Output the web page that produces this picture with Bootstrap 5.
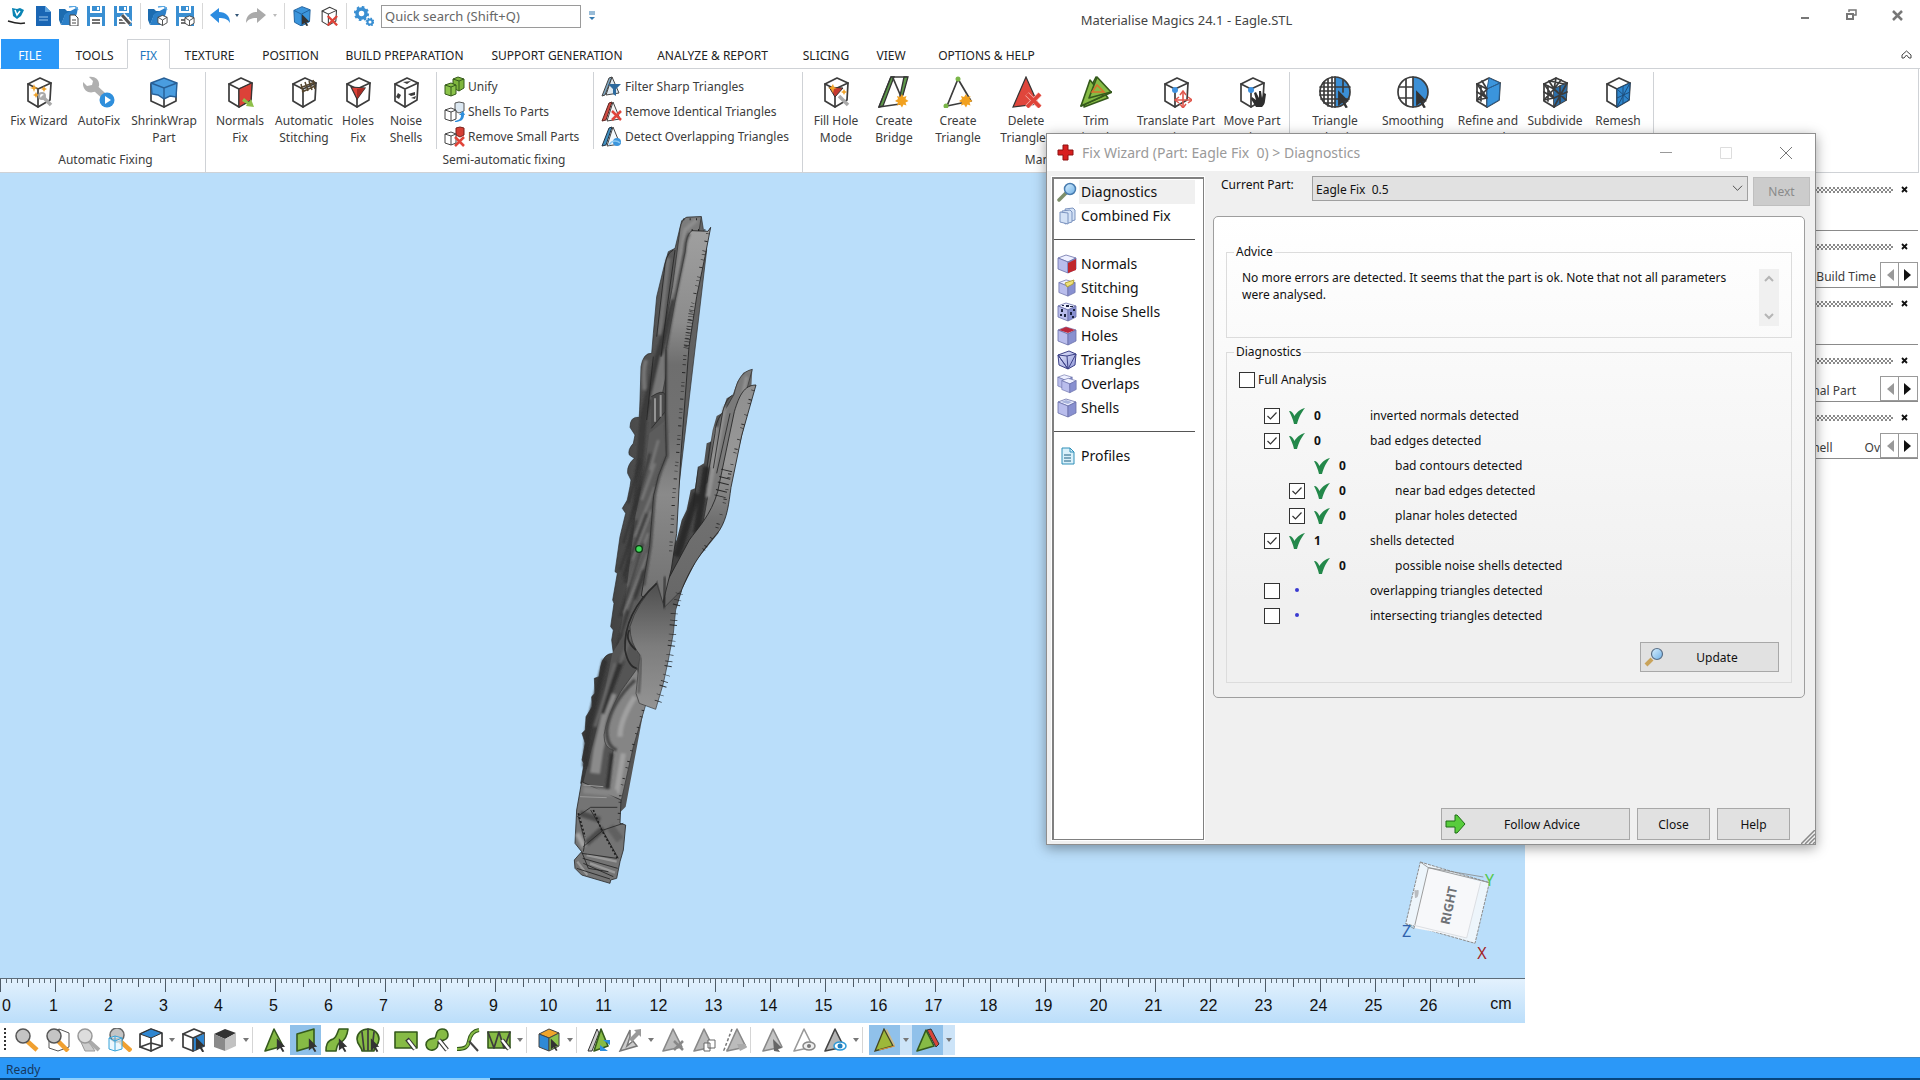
<!DOCTYPE html>
<html lang="en">
<head>
<meta charset="utf-8">
<meta name="viewport" content="width=device-width, initial-scale=1">
<title>Materialise Magics 24.1 - Eagle.STL</title>
<link rel="stylesheet" href="https://cdn.jsdelivr.net/npm/bootstrap@5.3.0/dist/css/bootstrap.min.css">
<style>
:root{--ink:#3c3c3c;--line:#cfd2d6;--sky:#badefa;--blue:#2b98f8}
body{font-family:"Noto Sans","Open Sans",sans-serif;font-size:12px;line-height:17px;color:var(--ink);background:#fff}
button{font:inherit;color:inherit;background:none;border:0;padding:0}
svg{display:block;flex:none}
.k{fill:none;stroke:#3c3c3c;stroke-width:1.7;stroke-linejoin:round;stroke-linecap:round}
.kw{fill:#fff;stroke:#3c3c3c;stroke-width:1.7;stroke-linejoin:round}
.kg{fill:#86bb45;stroke:#355a1c;stroke-width:1.6;stroke-linejoin:round}
.kx{fill:none;stroke:#df4338;stroke-width:3.6}
/* title bar */
.titlebar{height:38px;padding:0 12px 6px 7px}
.quick{width:582px;gap:7px}
.vr-line{width:1px;height:26px;background:#d8d8d8}
.searchbox{width:200px;height:23px;border:1px solid #9a9a9a;padding:0 3px;font-size:13px;color:#555;border-radius:0}
.searchbox::placeholder{color:#666}
.wintitle{font-size:13px;color:#444;padding:8px 18px 0 0}
/* tabs */
.tabstrip{height:31px;grid-template-columns:61px 65px 43px 79px 83px 145px 160px 151px 76px 54px 137px 1fr;border-bottom:1px solid var(--line);padding-left:1px;padding-top:1px}
.tabstrip a{color:#222;text-decoration:none;font-size:12px;text-align:center;line-height:30px;padding-top:2px;white-space:nowrap;height:30px}
.tabstrip .filetab{background:var(--blue);color:#fff;width:58px}
.tabstrip .opentab{border:1px solid var(--line);border-bottom-color:#fff;color:#2277be;line-height:28px}
/* ribbon */
.ribbon{height:104px;border-bottom:1px solid var(--line);border-right:1px solid var(--line);margin-right:1px}
.group{border-right:1px solid var(--line);margin-top:3px}
.g1{width:206px}.g2{width:597px}.g3{width:487px}.g4{width:364px}
.tools{display:grid;height:76px}
.g1 .tools{grid-template-columns:62px 58px 72px;padding-left:8px}
.g2 .tools{grid-template-columns:64px 64px 44px 52px 161px 1fr;padding-left:2px}
.g3 .tools{grid-template-columns:60px 56px 72px 64px 76px 84px 68px;padding-left:3px}
.g4 .tools{grid-template-columns:78px 78px 72px 62px 64px;padding-left:6px}
.tool{display:flex;flex-direction:column;align-items:center;white-space:nowrap;padding-top:4px;gap:4px;line-height:17px}
.smalltools{border-left:1px solid var(--line);padding:2px 0 0 7px}
.tool+.smalltools{margin-left:4px}
.smalltools button{display:flex;align-items:center;gap:3px;height:25px;white-space:nowrap}
.grouplabel{text-align:center;line-height:18px;margin-top:3px}
.g1 .grouplabel{padding-left:6px}
/* workspace */
.scene{background:var(--sky)}
.stage{min-width:0}
.eagle{left:540px;top:27px}
.navcube{right:25px;bottom:14px}
.ruler{height:45px;border-top:1px solid #5d6c78;background:linear-gradient(#e3f1fd,#bbdefa)}
.ruler ol{list-style:none;margin:17px 0 0;padding:0 0 0 26px;color:#111;font:16px/20px "Liberation Sans",sans-serif}
.ruler li{width:55px;text-align:center;flex:none}
.ruler li.zero{width:11px;margin-left:-25px;margin-right:14px}
.ruler .unit{width:90px;margin-top:-2px}
.dock{width:395px;padding:1px 2px 0 0}
.pane{height:57px;border-bottom:1px solid #8b8b8b;padding-top:9px}
.hatch{height:6px;width:90px;margin-right:7px;background:repeating-conic-gradient(#8a8a8a 0 25%,#fff 0 50%) 0 0/4px 4px}
.shut{width:18px;height:14px}
.panetabs{height:25px;margin-top:8px}
.panetabs button{width:19px;height:25px;border:1px solid #9a9a9a;display:flex;align-items:center;justify-content:center}
.panetabs button+button{border-left:0}
.panetabs span{padding-top:4px}
/* lower bar */
.lower{height:34px;padding-left:12px}
.lower button{width:31px;height:30px;display:flex;align-items:center;justify-content:center}
.lower .drop{width:12px}
.lower .drop::after{content:"";border:4px solid transparent;border-top-color:#777;border-bottom:0;border-left-width:3px;border-right-width:3px}
.lower .cut{width:7px;height:26px;border-left:1px solid #d5d5d5}
.lower .on{background:#90c1ea}.lower .onsoft{background:#cde4f8}
.gripdots{width:2px;height:24px;margin-left:-8px;margin-right:5px;background:repeating-linear-gradient(#333 0 2px,#fff 2px 4px)}
.status{height:21px;background:var(--blue);border-top:1px solid #4288c4;color:#17375c;font-size:12px;line-height:23px;padding-left:6px}
.sliver{height:2px;background:linear-gradient(90deg,#07457e 60px,#8fd0fc 60px 490px,#07457e 490px)}
/* wizard window */
.wizard{right:104px;top:133px;width:770px;height:712px;background:#f0f0f0;border:1px solid #8f8f8f;box-shadow:0 3px 12px rgba(0,0,0,.38);color:#111;z-index:5}
.wizhead{height:37px;background:#fff;padding:0 23px 0 10px;color:#9a9a9a;font-size:14px}
.wizlist{width:152px;border:1px solid #808080;outline:1px solid #fff;background:#fff;margin:6px 0 4px 5px;padding:2px 8px 0 1px;box-shadow:inset 1px 1px 0 #808080}
.wizlist a{color:#111;text-decoration:none;font-size:14px;height:24px;line-height:24px;gap:2px;padding-left:3px}
.wizlist a span{flex:1;padding-left:2px}
.wizlist .picked span{background:#f0f0f0}
.wizlist hr{margin:11px 0 12px;border-color:#555;opacity:1}
.wizmain{padding:5px 5px 4px 9px}
.partrow{padding-left:8px;gap:5px}
.partrow label{width:86px;line-height:18px;white-space:nowrap;flex:none}
.partselect{--bs-form-select-bg-img:url("data:image/svg+xml,%3csvg xmlns='http://www.w3.org/2000/svg' viewBox='0 0 12 12'%3e%3cpath fill='none' stroke='%23444' d='M1 3l5 5 5-5'/%3e%3c/svg%3e");background-size:11px;background-position:right 4px center;height:25px;padding:2px 20px 0 3px;font-size:12px;line-height:20px;background-color:#e1e1e1;border:1px solid #a0a0a0;border-radius:0;color:#111}
.nextbtn{width:57px;height:29px;background:#ccc;border:1px solid #bfbfbf;color:#8a8a8a;margin-top:1px}
.sheet{margin:10px 5px 0 0;border:1px solid #9e9e9e;border-radius:5px;background:linear-gradient(#fff,#f0f0f0 80%);padding:26px 12px 14px}
.sheet fieldset{border:1px solid #dcdcdc;min-width:0}
.sheet fieldset+fieldset{margin-top:5px}
.sheet legend{float:none;width:auto;font-size:12px;line-height:18px;margin:0 0 0 7px;padding:0 2px;height:18px}
.advice{padding:8px 12px 11px 15px}
.advice p{margin:0;line-height:17px}
.scroller{width:20px;height:57px;background:#f0f0f0;padding:6px 0}
.box{appearance:none;width:16px;height:16px;border:1px solid #333;border-radius:0;background-color:#fff;margin:0;flex:none}
.box:checked{background:#fff url("data:image/svg+xml,%3csvg xmlns='http://www.w3.org/2000/svg' viewBox='0 0 14 14'%3e%3cpath fill='none' stroke='%23333' stroke-width='1.2' d='M2.500 7l3 3 6-6.500'/%3e%3c/svg%3e") center/14px}
.full{height:25px;padding:0 0 0 12px;gap:3px;margin:6px 0 11px}
.finding{height:25px;gap:9px;padding-left:37px}
.finding.deep{padding-left:62px}
.finding .gapbox{width:16px}
.finding b{width:47px}
.plainbtn{background:#e1e1e1;border:1px solid #a8a8a8;height:32px;font-size:12px}
.updatebtn{width:139px;height:30px;margin:14px 12px 10px 0;padding:0 8px 0 3px}
.wizfoot{gap:7px;padding-right:20px}
.w-advice{width:189px;padding:0 11px 0 3px}.w-small{width:73px}
.grip{right:0;bottom:0}
</style>
<script src="https://cdn.jsdelivr.net/npm/bootstrap@5.3.0/dist/js/bootstrap.bundle.min.js"></script>
</head>
<body class="vh-100 d-flex flex-column overflow-hidden position-relative">

<svg width="0" height="0" class="position-absolute" aria-hidden="true">
  <defs>
    <linearGradient id="lens" x1="0" y1="0" x2="1" y2="1"><stop offset="0" stop-color="#d9f0ff"/><stop offset="1" stop-color="#6fb0e6"/></linearGradient>
    <linearGradient id="lilac" x1="0" y1="0" x2="1" y2="1"><stop offset="0" stop-color="#e6e8fb"/><stop offset="1" stop-color="#8f97d8"/></linearGradient>
    <linearGradient id="shade" x1="0" y1="0" x2="1" y2="0"><stop offset="0" stop-color="#383838"/><stop offset="1" stop-color="#666"/></linearGradient>
    <linearGradient id="rim" x1="0" y1="0" x2="0" y2="1"><stop offset="0" stop-color="#a0a0a0"/><stop offset=".25" stop-color="#8c8c8c"/><stop offset=".36" stop-color="#6e6e6e"/><stop offset=".55" stop-color="#727272"/><stop offset=".7" stop-color="#8a8a8a"/><stop offset="1" stop-color="#6f6f6f"/></linearGradient>
    <linearGradient id="rimfar" x1="0" y1="0" x2="0" y2="1"><stop offset="0" stop-color="#8f8f8f"/><stop offset=".35" stop-color="#989898"/><stop offset=".6" stop-color="#707070"/><stop offset="1" stop-color="#666"/></linearGradient>
    <linearGradient id="belly" x1="0" y1="0" x2="0" y2="1"><stop offset="0" stop-color="#4e4e4e"/><stop offset=".5" stop-color="#7d7d7d"/><stop offset="1" stop-color="#949494"/></linearGradient>
    <filter id="soft" x="-10%" y="-10%" width="120%" height="120%"><feGaussianBlur stdDeviation="3"/></filter>
  </defs>
  <symbol id="cube" viewBox="0 0 32 32"><path class="kw" d="M5 8 17 2l11 5-1 17-12 7-10-6z"/><path class="k" d="M5 8l10 5 13-6M15 13v18"/></symbol>
  <symbol id="arrowhead" viewBox="0 0 12 16"><path d="M1 0l10 10-4 .5 3 5-2 1-3-5-4 3z" fill="#333"/></symbol>
  <symbol id="tick" viewBox="0 0 16 16"><path d="M0 3c3 0 4 2 5.500 5C7 5 11 1 16 0c-4 5-6 9-8 16H5C4 11 2 7 0 3z" fill="#23884a"/></symbol>
  <symbol id="glass" viewBox="0 0 20 20"><path d="M2 18l7-7" stroke="#7e8f6b" stroke-width="3.500" stroke-linecap="round"/><circle cx="13" cy="7" r="5.500" fill="url(#lens)" stroke="#4a7db0" stroke-width="1.500"/></symbol>
  <symbol id="block" viewBox="0 0 20 20"><path d="M1 4l8-3 10 3-8 4z" fill="#eef0ff" stroke="#6a70a8" stroke-width=".8"/><path d="M1 4l10 4v11L1 15z" fill="#b9bdec" stroke="#6a70a8" stroke-width=".8"/><path d="M11 8l8-4v11l-8 4z" fill="#8890d0" stroke="#6a70a8" stroke-width=".8"/></symbol>
  <symbol id="save" viewBox="0 0 20 20"><path d="M1 0h3v7h12V0h3v20h-3v-9H4v9H1z" fill="#3a8fd2"/><path d="M6 0h8v5H6z" fill="#3a8fd2"/><path d="M11 1h2v3h-2z" fill="#fff"/><path d="M6 14h8M6 17h8" stroke="#444" stroke-width="1.300"/></symbol>
  <symbol id="folder" viewBox="0 0 20 20"><path d="M0 3h6l2 2h6v4H6L2 19 0 14z" fill="#1c6cb0"/><path d="M6 8l13-7-1 6-4 12H2z" fill="#2c80c8"/><path d="M10 1l6-1 3 4" fill="none" stroke="#5aa7e2" stroke-width="1.500"/></symbol>
  <symbol id="mini" viewBox="0 0 12 12"><path d="M1 3l5-2 5 2v6l-5 3-5-3z" fill="#fff" stroke="#444"/><path d="M1 3l5 3 5-3M6 6v6" fill="none" stroke="#444"/></symbol>
  <symbol id="tri" viewBox="0 0 24 24"><path d="M13 1 22 19 3 23z" stroke-width="1.600" stroke-linejoin="round"/></symbol>
</svg>

<header class="titlebar d-flex align-items-center">
  <div class="quick d-flex align-items-center">
    <svg width="20" height="20" viewBox="0 0 20 20"><path d="M5 2l5 1 3-1 4 2-3 6-4 3-4-3z" fill="#0a84b4"/><path d="M8 4l2 5 3-4" fill="none" stroke="#fff" stroke-width="1.500"/><path d="M1 15c6 2 12 3 17 2" stroke="#222" stroke-width="1.500" fill="none"/></svg>
    <svg width="18" height="20" viewBox="0 0 18 20"><path d="M2 0h9l6 6v14H2z" fill="#1a66b4"/><path d="M11 0v6h6z" fill="#5ca4e0"/><path d="M5 11h9M5 14h9" stroke="#9cc8ee"/></svg>
    <svg width="20" height="20"><use href="#folder"/><path d="M11 9h5l3 3v8h-8z" fill="#fff" stroke="#444"/><path d="M13 14h4M13 17h4" stroke="#444"/></svg>
    <svg width="20" height="20"><use href="#save"/></svg>
    <svg width="20" height="20"><use href="#save"/><path d="M9 9l8 9" stroke="#fff" stroke-width="6"/><path d="M9 9l8 9" stroke="#555" stroke-width="3"/></svg>
    <i class="vr-line"></i>
    <svg width="20" height="20"><use href="#folder"/><use href="#mini" x="9" y="8" width="11" height="12"/></svg>
    <svg width="20" height="20"><use href="#save"/><use href="#mini" x="9" y="9" width="11" height="11"/></svg>
    <i class="vr-line"></i>
    <svg width="29" height="20" viewBox="0 0 29 20"><path d="M0 9l9-7v4c7 0 11 4 11 11-2-4-6-5-11-5v5z" fill="#2d8ce0"/><path d="M25 8h4l-2 3z" fill="#357"/></svg>
    <svg width="31" height="20" viewBox="0 0 31 20"><path d="M20 9l-9-7v4C4 6 0 10 0 17c2-4 6-5 11-5v5z" fill="#aaa"/><path d="M27 8h4l-2 3z" fill="#bbb"/></svg>
    <i class="vr-line"></i>
    <svg width="20" height="20" viewBox="0 0 32 32"><path d="M3 7 16 1l13 5-1 19-13 7L4 26z" fill="#3b95dc" stroke="#1e5f9c" stroke-width="1.500"/><path d="M3 7l12 6 14-7M15 13v19" fill="none" stroke="#1e5f9c" stroke-width="1.500"/><path d="M16 13l12 12-5 1 3 5-3 1-3-5-4 3z" fill="#333"/></svg>
    <svg width="20" height="20" viewBox="0 0 32 32"><use href="#cube"/><path d="M14 16l15 15M29 16 14 31" class="kx" stroke-width="5"/></svg>
    <i class="vr-line"></i>
    <svg width="20" height="20" viewBox="0 0 20 20"><circle cx="7.500" cy="7.500" r="4.500" fill="none" stroke="#3a8fd2" stroke-width="3.500"/><circle cx="7.500" cy="7.500" r="6.600" fill="none" stroke="#3a8fd2" stroke-width="2" stroke-dasharray="2.600 2.600"/><circle cx="16" cy="16" r="2.500" fill="none" stroke="#3a8fd2" stroke-width="2"/><circle cx="16" cy="16" r="3.800" fill="none" stroke="#3a8fd2" stroke-width="1.400" stroke-dasharray="1.500 1.500"/></svg>
    <input class="searchbox" type="search" placeholder="Quick search (Shift+Q)" aria-label="Quick search">
  </div>
  <svg class="ms-n1" width="8" height="10" viewBox="0 0 8 10"><path d="M0 1h6M0 3h6" stroke="#357ab0"/><path d="M0 6h6L3 9z" fill="#357ab0"/></svg>
  <div class="wintitle flex-fill text-center">Materialise Magics 24.1 - Eagle.STL</div>
  <div class="d-flex align-items-center gap-4">
    <button aria-label="Minimize"><svg width="22" height="20"><path d="M7 12h8" stroke="#777" stroke-width="2"/></svg></button>
    <button aria-label="Restore"><svg width="22" height="20"><path d="M9 6V4h7v5h-2" fill="none" stroke="#777" stroke-width="1.500"/><path d="M7 8h6v5H7z" fill="none" stroke="#777" stroke-width="2"/></svg></button>
    <button aria-label="Close application"><svg width="22" height="20"><path d="M7 5l9 9M16 5l-9 9" stroke="#777" stroke-width="2.500"/></svg></button>
  </div>
</header>

<nav class="tabstrip d-grid" aria-label="Ribbon tabs">
  <a href="#" class="filetab">FILE</a><a href="#">TOOLS</a><a href="#" class="opentab" aria-current="page">FIX</a><a href="#">TEXTURE</a><a href="#">POSITION</a><a href="#">BUILD PREPARATION</a><a href="#">SUPPORT GENERATION</a><a href="#">ANALYZE &amp; REPORT</a><a href="#">SLICING</a><a href="#">VIEW</a><a href="#">OPTIONS &amp; HELP</a>
  <button class="d-flex justify-content-end align-items-center pe-2" aria-label="Collapse ribbon"><svg width="11" height="9" viewBox="0 0 11 9"><path d="M1 5l4.500-4L10 5M1 5v3h2l2.500-3L8 8h2V5" fill="none" stroke="#444"/></svg></button>
</nav>

<section class="ribbon d-flex">
  <div class="group g1">
    <div class="tools">
      <button class="tool"><svg width="32" height="32"><use href="#cube"/><path d="M11 8l1 3 3 1-3 1-1 3-1-3-3-1 3-1zM21 10l1 2 2 1-2 1-1 2-1-2-2-1 2-1zM13 16l1 2 2 1-2 1-1 2-1-2-2-1 2-1z" fill="#f0a32a"/><path d="M19 20l9 9" stroke="#aaa" stroke-width="3.500"/><circle cx="19" cy="20" r="3" fill="none" stroke="#aaa" stroke-width="2"/></svg><span>Fix Wizard</span></button>
      <button class="tool"><svg width="32" height="32"><path d="M10 10l12 11" stroke="#b0b0b0" stroke-width="6"/><path d="M6 1l4 4-1 4-5 1-4-4c-1 8 6 13 13 9l3-5c1-6-4-10-10-9z" fill="#b0b0b0"/><circle cx="24" cy="24" r="7.500" fill="#2f8fdc"/><path d="M22 20l6 4-6 4z" fill="#fff"/></svg><span>AutoFix</span></button>
      <button class="tool"><svg width="32" height="32"><path class="kw" d="M3 8v17l13 6 12-6V8z"/><path class="k" d="M16 21v10"/><path d="M3 7l13-5 13 5-1 14-6-1-6 3-6-4-6-1z" fill="#4a9de0" stroke="#275f96" stroke-width="1.400"/><path d="M3 7l13 5 13-5M16 12v10" fill="none" stroke="#275f96" stroke-width="1.400"/></svg><span>ShrinkWrap<br>Part</span></button>
    </div>
    <div class="grouplabel">Automatic Fixing</div>
  </div>
  <div class="group g2">
    <div class="tools">
      <button class="tool"><svg width="32" height="32"><use href="#cube"/><path d="M15 13 28 7l-1 17-12 7z" fill="#dc4238" stroke="#333"/><path d="M20 22l5 4 2-3 3 8-8-1 1-2-5-3z" fill="#8fc04a"/></svg><span>Normals<br>Fix</span></button>
      <button class="tool"><svg width="32" height="32"><use href="#cube"/><path d="M12 12l15-6M13 8l2 8M17 6l3 9M21 5l3 9M25 4l2 9M14 16l13-6" stroke="#54452e" stroke-width="1.500"/></svg><span>Automatic<br>Stitching</span></button>
      <button class="tool"><svg width="32" height="32"><use href="#cube"/><path d="M9 11l14 1-8 11z" fill="#dc4238" stroke="#333" stroke-width="1.200"/><path d="M15 13v10l8-11z" fill="#a92c24"/></svg><span>Holes<br>Fix</span></button>
      <button class="tool"><svg width="32" height="32"><use href="#cube"/><path d="M13 6l8-1-4 3zM8 17l3 2-2 4-3-2zM18 18l7-2v3l-4 1zM21 22l5-2-1 3z" fill="#3c3c3c"/></svg><span>Noise<br>Shells</span></button>
      <div class="smalltools">
        <button><svg width="21" height="21" viewBox="0 0 21 21"><path d="M9 3l5-2 6 2v9l-5 3-6-3z" fill="#7fb53d" stroke="#355a1c"/><path d="M9 3l6 2 5-2M15 5v10" fill="none" stroke="#355a1c"/><path d="M1 9l6-2 5 2v9l-5 2-6-2z" fill="#8bc34a" stroke="#355a1c"/><path d="M1 9l6 2 5-2M7 11v9" fill="none" stroke="#355a1c"/></svg>Unify</button>
        <button><svg width="21" height="21" viewBox="0 0 21 21"><path d="M11 2l4-1 5 1v8l-5 2-4-2z" fill="#dce8f2" stroke="#555"/><path d="M1 9l6-2 5 2v9l-5 2-6-2z" fill="#fff" stroke="#444"/><path d="M1 9l6 2 5-2M7 11v9" fill="none" stroke="#444"/><path d="M11 20c5-1 6-3 6-6h-2l4-4 2 4h-1c0 5-4 7-9 7z" fill="#2f8fdc"/></svg>Shells To Parts</button>
        <button><svg width="21" height="21" viewBox="0 0 21 21"><path d="M12 2l4-1 4 1v7l-4 2-4-2z" fill="#d53e33" stroke="#7a201a"/><path d="M1 8l6-2 5 2v9l-5 2-6-2z" fill="#fff" stroke="#444"/><path d="M1 8l6 2 5-2M7 10v9" fill="none" stroke="#444"/><path d="M11 11l9 9M20 11l-9 9" stroke="#e0453a" stroke-width="2.500"/></svg>Remove Small Parts</button>
      </div>
      <div class="smalltools">
        <button><svg width="21" height="21" viewBox="0 0 21 21"><path d="M8 2 1 20l3-1L11 1z" fill="#7fa6c0" stroke="#444"/><path d="M11 1l7 16-13 2z" fill="#dfe9f0" stroke="#444"/><path d="M7 8h13l-5 5v7l-3-2v-5z" fill="#2d6a9e"/></svg>Filter Sharp Triangles</button>
        <button><svg width="21" height="21" viewBox="0 0 21 21"><path d="M8 2 1 20l4-1 6-18z" fill="#cf4b42" stroke="#5a2420"/><path d="M12 1l7 17-13 2z" fill="#f6f6f6" stroke="#444"/><path d="M11 10l9 9M20 10l-9 9" stroke="#e0453a" stroke-width="2.500"/></svg>Remove Identical Triangles</button>
        <button><svg width="21" height="21" viewBox="0 0 21 21"><path d="M8 2 1 20l4-1 6-18z" fill="#3f8fc0" stroke="#234"/><path d="M12 1l7 17-13 2z" fill="#f3f8fc" stroke="#444"/><circle cx="16" cy="16" r="4" fill="#3b95dc"/><path d="M8 19c3-5 8-5 11-2" stroke="#8cc8f2" fill="none" stroke-width="1.500"/></svg>Detect Overlapping Triangles</button>
      </div>
    </div>
    <div class="grouplabel">Semi-automatic fixing</div>
  </div>
  <div class="group g3">
    <div class="tools">
      <button class="tool"><svg width="32" height="32"><use href="#cube"/><path d="M9 11l14 1-8 9z" fill="#c53a30" stroke="#333"/><path d="M13 8l1 3 3 1-3 1-1 4-2-4-3-1 3-1zM24 13l1 2 2 1-2 1-1 2-1-2-2-1 2-1z" fill="#f0a32a"/><path d="M19 20l9 9" stroke="#aaa" stroke-width="3.500"/></svg><span>Fill Hole<br>Mode</span></button>
      <button class="tool"><svg width="32" height="32"><path class="kw" d="M13 1h16l-7 27L1 31z"/><path d="M13 1h3L5 30l-4 1zM26 1h4l-5 18-3 1z" fill="#5e9a4b" stroke="#333" stroke-width="1.300"/><path class="k" d="M15 2l9 21" stroke-width="1"/><path d="M24 18l1.500 3 3-1-1 3 3 2-3 1.500 1 3-3-1-1.500 3-2-3-3 1 1-3-3-1.500 3-2-1-3 3 1z" fill="#f2a11f"/></svg><span>Create<br>Bridge</span></button>
      <button class="tool"><svg width="32" height="32"><path class="k" d="M16 3 29 25 5 30z"/><circle cx="16" cy="3" r="2.500" fill="#7ab648"/><circle cx="4" cy="30" r="2.500" fill="#7ab648"/><path d="M24 18l1.500 3 3-1-1 3 3 2-3 1.500 1 3-3-1-1.500 3-2-3-3 1 1-3-3-1.500 3-2-1-3 3 1z" fill="#f2a11f"/></svg><span>Create<br>Triangle</span></button>
      <button class="tool"><svg width="32" height="32"><path d="M16 1 28 28 3 31z" fill="#e0463c" stroke="#333" stroke-width="1.200"/><path d="M17 18l13 13M30 18 17 31" stroke="#f7b5b0" stroke-width="5"/><path d="M17 18l13 13M30 18 17 31" class="kx"/></svg><span>Delete<br>Triangles</span></button>
      <button class="tool"><svg width="32" height="32"><path class="kg" d="M10 5 4 31l24-9-3-4z"/><path class="kg" d="M16 1 1 30l31-14-12-3z"/><path class="kg" d="M10 4 1 30l22-10z"/><path class="kg" d="M17 1l14 15-22 6z"/><path d="M12 16h12l-7-7z" fill="none" stroke="#d9722c" stroke-width="1.500"/></svg><span>Trim<br>Triangles</span></button>
      <button class="tool"><svg width="32" height="32"><use href="#cube"/><circle cx="15" cy="14" r="3" fill="#3f92e0"/><path d="M23 16v15M16 24h15" stroke="#e0564c" stroke-width="1.600"/><path d="M20 19l3-4 3 4M20 28l3 4 3-4M19 21l-4 3 4 3M28 21l4 3-4 3" fill="none" stroke="#e0564c" stroke-width="1.500"/></svg><span>Translate Part<br>Points</span></button>
      <button class="tool"><svg width="32" height="32"><use href="#cube"/><circle cx="15" cy="14" r="3" fill="#3f92e0"/><path d="M20 31l-5-8 1-2 4 3-2-7 2-1 3 6 0-7h2l1 7 2-5 2 1-1 7c0 3-2 5-3 6z" fill="#2d2d2d"/></svg><span>Move Part<br>Points</span></button>
    </div>
    <div class="grouplabel">Manual</div>
  </div>
  <div class="group g4">
    <div class="tools">
      <button class="tool"><svg width="32" height="32"><circle cx="16" cy="16" r="15" fill="#fff"/><path d="M16 1a15 15 0 0 1 0 30z" fill="#3b8fd6"/><circle class="k" cx="16" cy="16" r="15"/><path class="k" d="M4 7h12M1 11h30M1 15h15M1 19h15M2 23h28M5 27h11M5 6v21M9 3v27M13 1v30M16 1v30M24 4v12" stroke-width="1.300"/><use href="#arrowhead" x="18" y="14" width="13" height="18"/></svg><span>Triangle<br>Reduction</span></button>
      <button class="tool"><svg width="32" height="32"><circle cx="16" cy="16" r="15" fill="#fff"/><path d="M16 1a15 15 0 0 1 0 30z" fill="#3b8fd6"/><circle class="k" cx="16" cy="16" r="15"/><path class="k" d="M2 11h14M2 22h14M9 3v26M16 1v30"/><use href="#arrowhead" x="18" y="14" width="13" height="18"/></svg><span>Smoothing</span></button>
      <button class="tool"><svg width="32" height="32"><use href="#cube"/><path d="M17 2l11 5-13 6zM15 13 28 7l-1 17-12 7z" fill="#3b95dc" stroke="#2a5f90"/><path class="k" d="M5 8l10 14M5 24l10-11M5 16l10 6M9 10v15M10 5l5 8M5 24l10-2" stroke-width="1.200"/></svg><span>Refine and<br>Smooth</span></button>
      <button class="tool"><svg width="32" height="32"><use href="#cube"/><path d="M15 13 28 7l-1 17-12 7z" fill="#2b6da8"/><path class="k" d="M5 8l10 14M5 24l10-11M5 16l10 6M9 10v15M10 5l5 8 2-11M5 24l10-2M22 4l-7 9M15 13l12 11M15 31 28 7M15 22l13-6M21 10v17M11 5l14 3" stroke-width="1.100"/></svg><span>Subdivide<br>Parts</span></button>
      <button class="tool"><svg width="32" height="32"><use href="#cube"/><path d="M15 13 28 7l-1 17-12 7z" fill="#2f86cc" stroke="#1e4e7c"/><path d="M15 13l12 11M15 31 28 7M15 22l13-6M21 10v17" stroke="#1e4e7c"/></svg><span>Remesh</span></button>
    </div>
  </div>
</section>

<main class="flex-fill d-flex">
  <div class="stage flex-fill d-flex flex-column">
    <div class="scene flex-fill position-relative">
      <svg class="eagle position-absolute" width="240" height="700" viewBox="0 0 720 2100" role="img" aria-label="Eagle model" stroke-linejoin="round" stroke-linecap="butt">
        <!-- far wing -->
        <path d="M637 508 610 518 592 545 578 585 560 595 545 640 530 648 518 690 512 725 500 730 492 790 475 800 465 865 452 870 440 930 425 960 410 1020 375 1080 355 1140 372 1220 420 1180 470 1080 535 1000 560 900 632 600z" fill="url(#shade)"/>
        <path d="M637 508c-30 6-45 30-55 75l-34 60-60 330 20 10 70-220 45-205z" fill="#7a7a7a" stroke="#2a2a2a" stroke-width="2"/>
        <g filter="url(#soft)" fill="none"><path d="M620 530l-70 330M555 620l-50 270M530 680l-30 210" stroke="#929292" stroke-width="10"/><path d="M500 800l-30 200M470 880l-60 190" stroke="#2c2c2c" stroke-width="22"/></g>
        <path d="M578 585q-20 10-30 50l-28 170M545 640q-20 30-20 60l-25 150M512 725l-20 140M570 640l-40 180M475 800l-15 120" fill="none" stroke="#262626" stroke-width="2.500"/>
        <path d="M648 555c-35 0-50 30-65 80l-50 240c-20 70-60 110-85 145l-75 140v72l35-10c30-110 80-170 130-230 25-40 28-80 35-130l32-155z" fill="url(#rimfar)" stroke="#222" stroke-width="2.500"/>
        <!-- near wing, back feathers -->
        <path d="M484 50 440 52 425 62 405 145 385 155 372 200 350 290 340 400 335 460Q310 458 303 500L300 600 298 652Q270 648 270 682L285 705 280 730Q262 750 268 765L283 775Q260 795 263 820L273 840 270 860 262 900 247 925 257 940 240 1010 225 1115 232 1120 218 1200 222 1210 212 1280 220 1290 215 1320 220 1360Q190 1360 182 1400L178 1430 163 1435 165 1480 155 1490 157 1520 138 1550 136 1590 126 1600 136 1630 126 1680 132 1690 122 1750 200 1760 330 1400 400 1000 500 150z" fill="url(#shade)" stroke="#2a2a2a" stroke-width="2"/>
        <path d="M484 50 440 52q-15 5-20 35l-22 170-30 160-30 150 20 60 60-300 60-240z" fill="#7c7c7c" stroke="#2c2c2c" stroke-width="2"/>
        <g filter="url(#soft)" fill="none">
          <path d="M470 60l-35 30-30 190" stroke="#8e8e8e" stroke-width="12"/>
          <path d="M385 175l-26 230M318 480q-10 30-4 90" stroke="#757575" stroke-width="13"/>
          <path d="M405 300l-50 170-45 180-20 260-30 240" stroke="#3b3b3b" stroke-width="22"/>
          <path d="M372 470l-30 130" stroke="#777" stroke-width="22"/>
        </g>
        <path d="M400 150q-25 10-28 70l-22 190M405 150l-22 160-20 160M340 470l-20 190" fill="none" stroke="#242424" stroke-width="2.500"/>
        <path d="M378 660l-50 40-14 110-28 140-30 250-20 130 40 50 60-100 50-240z" fill="#5c5c5c"/>
        <path d="M334 590q36-24 42-5v50l-42 50" fill="#4b4b4b" stroke="#2a2a2a" stroke-width="2.500"/>
        <path d="M345 595v70M362 585v65" fill="none" stroke="#949494" stroke-width="6"/>
        <g filter="url(#soft)" fill="none" stroke="#858585" stroke-width="8" opacity=".7"><path d="M355 720l-25 90M345 790l-40 110M345 860l-60 150M335 930l-60 150M325 1000l-60 160M325 1060l-60 150M300 1130l-50 110M285 1190l-40 110"/></g>
        <g filter="url(#soft)" fill="none" stroke="#303030" stroke-width="7" opacity=".8"><path d="M330 760l-45 170M300 780l-35 130M300 860l-50 170M290 960l-50 150M320 940l-70 190M310 1030l-70 220M310 1110l-70 210M335 1060l-50 140M262 1230l-30 110"/></g>
        <!-- near wing, rim -->
        <path d="M512 82l-8 12-48-2q-18 10-20 60l-30 145-28 150-2 190 3 130q-28 60-38 120l-12 150-25 150 60 40 30-120 16-107 13-240 12-160 12-160 23-150 25-120z" fill="url(#rim)" stroke="#222" stroke-width="2.500"/>
        <path d="M448 100q-12 20-14 55l-30 145-26 147" fill="none" stroke="#4a4a4a" stroke-width="8" filter="url(#soft)"/>
        <path d="M378 447v190l4 130q-28 60-38 120l-12 150-20 120" fill="none" stroke="#3a3a3a" stroke-width="6" filter="url(#soft)"/>
        <!-- lower body -->
        <path d="M372 1220l-20-80-60 100-75 120-40 200-50 200 10 60 60 60 60-60 60-320z" fill="#555"/>
        <g filter="url(#soft)" fill="none">
          <path d="M215 1480l-40 170-10 70" stroke="#8b8b8b" stroke-width="30"/>
          <path d="M245 1380l-60 160M195 1380l-50 200-10 120" stroke="#303030" stroke-width="16"/>
          <path d="M225 1390l-60 190M300 1240l-60 150" stroke="#666" stroke-width="10"/>
        </g>
        <path d="M317 1515l-25-110-50 70q-40 70-50 130 0 40 28 45l-25 140 48 15 37-165z" fill="#858585" stroke="#333" stroke-width="2"/>
        <g filter="url(#soft)" fill="none">
          <path d="M285 1440q-75 70-85 150 0 50 30 60" stroke="#444" stroke-width="10"/>
          <path d="M285 1490q-45 70-45 120M250 1660l-20 120" stroke="#a0a0a0" stroke-width="16"/>
          <path d="M215 1660l-15 130" stroke="#333" stroke-width="12"/>
        </g>
        <path d="M350 1150q-60 60-80 130 0 50 30 85l-12 115 10 30 49 18 23-78 15-70 15-80 7-70 18-60-52 52z" fill="url(#belly)" stroke="#333" stroke-width="2"/>
        <path d="M350 1150q-100 90-95 200 10 50 35 55M268 1290q-15 30 20 60" fill="none" stroke="#2a2a2a" stroke-width="5"/>
        <path d="M290 1370q10 0 14 10l-8 100" fill="none" stroke="#555" stroke-width="7" filter="url(#soft)"/>
        <path d="M375 1130l-4 95" stroke="#333" stroke-width="7" filter="url(#soft)"/>
        <!-- tail block -->
        <path d="M125 1745l-15 85-5 100 20 25-22 25 2 25 20 20 85 25 2-10 18-5 10-50 10-35 7-75-17-5 3-70z" fill="#747474" stroke="#2a2a2a" stroke-width="2.500"/>
        <g filter="url(#soft)" fill="none"><path d="M130 1770l100 10" stroke="#868686" stroke-width="20"/><path d="M120 1840l60 20M140 1930l50-45" stroke="#4c4c4c" stroke-width="18"/><path d="M112 1900l20 40" stroke="#a5a5a5" stroke-width="14"/><path d="M210 1880l30 40" stroke="#606060" stroke-width="24"/></g>
        <path d="M112 1850l40-28 80 0M130 1940l60-50 60-20M152 1830l35 60 48 85M115 1850l20 75-5 30" fill="none" stroke="#262626" stroke-width="2.500"/>
        <path d="M140 1965l90 20M150 1990l75 28M112 1985l30 40" fill="none" stroke="#999" stroke-width="7"/>
        <path d="M125 1960l105 15M128 1975l105 30M130 1990l90 40M110 2005l100 32M125 1955l20 50 60 10" fill="none" stroke="#222" stroke-width="2.500"/>
        <path d="M130 1755l60 5M120 1790l80 3" fill="none" stroke="#9b9b9b" stroke-width="3"/>
        <path d="M115 1840l20 70M160 1830l25 60 50 90" fill="none" stroke="#1d1d1d" stroke-width="5" stroke-dasharray="6 6"/>
        <!-- facet ticks along the rims -->
        <g fill="none" stroke="#1b1b1b" opacity=".85">
          <path d="M503 100l-22 108-25 112-20 130-11 150-12 160-12 130-10 180" stroke-width="10" stroke-dasharray="2 21 3 27 2 9 2 14"/>
          <path d="M455 330l-18 122" stroke-width="16" stroke-dasharray="2 9 2 6"/>
          <path d="M639 570l-38 130-30 110-18 100-24 80-45 70" stroke-width="10" stroke-dasharray="2 27 3 9 2 34"/>
          <path d="M418 1180l-15 60-8 90-14 90-30 95" stroke-width="22" stroke-dasharray="2 18 2 12 3 25"/>
          <path d="M309 1530l-34 120-33 120-6 90" stroke-width="8" stroke-dasharray="3 17 2 31"/>
          <path d="M560 810l-20 80" stroke-width="34" stroke-dasharray="3 20 3 14"/>
          <path d="M430 58h54M455 90h54" stroke-width="6" stroke-dasharray="3 16"/>
        </g>
        <circle cx="297" cy="1047" r="10" fill="#3edc57" stroke="#0b3a12" stroke-width="4"/>
      </svg>
      <svg class="navcube position-absolute" width="100" height="107" viewBox="120 50 300 321">
        <path d="M181 65l207 62-43 182-208-59z" fill="#f3f7fb" fill-opacity=".9" stroke="#8c8c8c" stroke-width="3" stroke-dasharray="9 3"/>
        <path d="M205 82l157 43-42 168-158-30z" fill="#f7f8fa"/>
        <path d="M181 65l24 17 183 45M205 82l-43 183-25-15M205 82l165 28" fill="none" stroke="#8c8c8c" stroke-width="2.500"/>
        <path d="M362 125l-42 168-158-38" fill="none" stroke="#dcdfe3" stroke-width="3"/>
        <path d="M163 148c10 4 14-3 13 8s-3 18-11 17z" fill="#b9bcc0"/>
        <text transform="translate(268 255) rotate(-78)" font-family="Open Sans,sans-serif" font-weight="700" font-size="38" fill="#6f7276">RIGHT</text>
        <g font-family="Noto Sans,sans-serif" font-size="48"><text x="375" y="136" fill="#55c84c">Y</text><text x="126" y="290" fill="#2f62ad">Z</text><text x="352" y="356" fill="#a31f24">X</text></g>
      </svg>
    </div>
    <div class="ruler position-relative overflow-hidden">
      <svg class="position-absolute top-0 start-0" width="1476" height="14" shape-rendering="crispEdges">
        <defs><pattern id="cmticks" width="55" height="14" patternUnits="userSpaceOnUse"><path d="M.5 0v13M28 0v8" stroke="#4d5a66"/><path d="M6 0v4M11.500 0v4M17 0v4M22.500 0v4M33.500 0v4M39 0v4M44.500 0v4M50 0v4" stroke="#5d6c78"/></pattern></defs>
        <rect width="1476" height="14" fill="url(#cmticks)"/>
      </svg>
      <ol class="d-flex"><li class="zero">0</li><li>1</li><li>2</li><li>3</li><li>4</li><li>5</li><li>6</li><li>7</li><li>8</li><li>9</li><li>10</li><li>11</li><li>12</li><li>13</li><li>14</li><li>15</li><li>16</li><li>17</li><li>18</li><li>19</li><li>20</li><li>21</li><li>22</li><li>23</li><li>24</li><li>25</li><li>26</li><li class="unit">cm</li></ol>
    </div>
  </div>
  <aside class="dock flex-shrink-0" aria-label="Part pages">
    <div class="pane"><div class="d-flex justify-content-end align-items-center"><i class="hatch"></i><button class="shut" aria-label="Close pane"><svg width="10" height="10"><path d="M2 2l5 5M7 2 2 7" stroke="#111" stroke-width="1.800"/></svg></button></div></div>
    <div class="pane"><div class="d-flex justify-content-end align-items-center"><i class="hatch"></i><button class="shut" aria-label="Close pane"><svg width="10" height="10"><path d="M2 2l5 5M7 2 2 7" stroke="#111" stroke-width="1.800"/></svg></button></div><div class="panetabs d-flex justify-content-end align-items-center"><span class="pe-1">Build Time</span><button aria-label="Previous tab"><svg width="8" height="12"><path d="M8 0v12L1 6z" fill="#999"/></svg></button><button aria-label="Next tab"><svg width="8" height="12"><path d="M0 0v12l7-6z" fill="#111"/></svg></button></div></div>
    <div class="pane"><div class="d-flex justify-content-end align-items-center"><i class="hatch"></i><button class="shut" aria-label="Close pane"><svg width="10" height="10"><path d="M2 2l5 5M7 2 2 7" stroke="#111" stroke-width="1.800"/></svg></button></div></div>
    <div class="pane"><div class="d-flex justify-content-end align-items-center"><i class="hatch"></i><button class="shut" aria-label="Close pane"><svg width="10" height="10"><path d="M2 2l5 5M7 2 2 7" stroke="#111" stroke-width="1.800"/></svg></button></div><div class="panetabs d-flex justify-content-end align-items-center"><span class="pe-4">nal Part</span><button aria-label="Previous tab"><svg width="8" height="12"><path d="M8 0v12L1 6z" fill="#999"/></svg></button><button aria-label="Next tab"><svg width="8" height="12"><path d="M0 0v12l7-6z" fill="#111"/></svg></button></div></div>
    <div class="pane"><div class="d-flex justify-content-end align-items-center"><i class="hatch"></i><button class="shut" aria-label="Close pane"><svg width="10" height="10"><path d="M2 2l5 5M7 2 2 7" stroke="#111" stroke-width="1.800"/></svg></button></div><div class="panetabs d-flex justify-content-end align-items-center"><span class="pe-4">hell</span><span class="ps-2">Ov</span><button aria-label="Previous tab"><svg width="8" height="12"><path d="M8 0v12L1 6z" fill="#999"/></svg></button><button aria-label="Next tab"><svg width="8" height="12"><path d="M0 0v12l7-6z" fill="#111"/></svg></button></div></div>
  </aside>
</main>

<nav class="lower d-flex align-items-center" aria-label="View and marking tools">
  <i class="gripdots"></i>
  <button aria-label="Zoom"><svg width="24" height="24"><path d="M12 13l10 9" stroke="#f0a030" stroke-width="4.500"/><circle cx="8" cy="8" r="7" fill="#c4c4c4" stroke="#555" stroke-width="1.500"/></svg></button>
  <button aria-label="Zoom part"><svg width="24" height="24"><path d="M3 8 13 1l10 4v14l-11 4-9-3zM13 1v8" fill="#fff" stroke="#555"/><path d="M12 13l10 10" stroke="#f0a030" stroke-width="4.500"/><circle cx="8" cy="8" r="7" fill="#c4c4c4" stroke="#555" stroke-width="1.500"/></svg></button>
  <button aria-label="Unzoom"><svg width="24" height="24"><path d="M3 12l5 11h10l-6-9" fill="#ccc" stroke="#999"/><path d="M12 13l10 9" stroke="#aaa" stroke-width="4"/><circle cx="8" cy="8" r="7" fill="#ddd" stroke="#999" stroke-width="1.500"/></svg></button>
  <button aria-label="Zoom selection"><svg width="24" height="24"><path d="M12 13l11 10" stroke="#f0a030" stroke-width="4.500"/><circle cx="9" cy="7" r="7" fill="#c4c4c4" stroke="#666" stroke-width="1.500"/><path d="M1 10l6-2 7 2v11l-7 2-6-2zM1 10l6 3 7-3M7 8v15" fill="#e2f4fd" fill-opacity=".7" stroke="#39a3d8"/></svg></button>
  <button aria-label="Views"><svg width="24" height="24"><path class="kw" d="M1 6 12 1l11 4v13l-11 5-11-4z"/><path d="M1 6 12 1l11 4-11 5z" fill="#2f86d0" stroke="#333"/><path class="k" d="M12 10v13M1 19l11-4 11 3" stroke-width="1.200"/></svg></button>
  <button class="drop" aria-label="More views"></button>
  <button aria-label="Pick view"><svg width="24" height="24"><path class="kw" d="M1 6 12 1l10 4v13l-11 5-10-4z"/><path d="M11 10 22 6v12l-11 5z" fill="#2f86d0"/><path class="k" d="M1 6l10 4 11-5M11 10v13"/><use href="#arrowhead" x="13" y="9" width="11" height="15"/></svg></button>
  <button aria-label="Shading"><svg width="24" height="24"><path d="M1 6 12 1l11 4-11 6z" fill="#333"/><path d="M1 6l11 5v12L1 19z" fill="#8a8a8a"/><path d="M12 11l11-6v13l-11 5z" fill="#c2c2c2"/></svg></button>
  <button class="drop" aria-label="More shading"></button><i class="cut"></i>
  <button aria-label="Mark triangle"><svg width="24" height="24"><path class="kg" d="M11 1l9 17-18 5z"/><use href="#arrowhead" x="13" y="10" width="10" height="14"/></svg></button>
  <button class="on" aria-label="Mark plane"><svg width="24" height="24"><path class="kg" d="M3 6 20 1v17L3 23z"/><use href="#arrowhead" x="14" y="10" width="10" height="14"/></svg></button>
  <button aria-label="Mark surface"><svg width="24" height="24"><path class="kg" d="M1 23c0-6 1-10 7-12 4-2 4-6 6-10h9c-1 8-3 11-7 13-4 1-4 5-5 9z"/><use href="#arrowhead" x="13" y="10" width="10" height="14"/></svg></button>
  <button aria-label="Mark shell"><svg width="24" height="24"><path class="kg" d="M6 23c0-4-5-6-5-12a11 10 0 0 1 22 0c0 6-5 8-5 12z"/><path class="k" d="M8 22 6 4M12 22V1M16 22l2-18" stroke-width="1.200"/><use href="#arrowhead" x="14" y="10" width="10" height="14"/></svg></button><i class="cut"></i>
  <button aria-label="Window marking"><svg width="24" height="24"><path class="kg" d="M1 4h22v16H1z"/><path d="M13 11l8 10" stroke="#333" stroke-width="4.500"/><path d="M14 12l7 9" stroke="#fff" stroke-width="2.500"/></svg></button>
  <button aria-label="Freeform marking"><svg width="24" height="24"><path class="kg" d="M17 1c7 0 8 9 2 11-3 2-6 0-6 4 0 7-11 9-12 1 0-6 5-6 9-7 2-2 0-9 7-9z"/><path d="M14 12l8 10" stroke="#333" stroke-width="4.500"/><path d="M14 12l8 10" stroke="#fff" stroke-width="2.500"/></svg></button>
  <button aria-label="Brush marking"><svg width="24" height="24"><path d="M1 21c8 0 11-2 12-8 1-5 3-10 10-11" fill="none" stroke="#355a1c" stroke-width="4"/><path d="M1 21c8 0 11-2 12-8 1-5 3-10 10-11" fill="none" stroke="#86bb45" stroke-width="2"/><path d="M13 13l9 10" stroke="#444" stroke-width="2"/></svg></button>
  <button aria-label="Mesh marking"><svg width="24" height="24"><path class="kg" d="M1 4h22v16H1z"/><path class="k" d="M1 4l6 16 5-16 5 16 6-16" stroke-width="1.300"/><path d="M15 12l7 9" stroke="#333" stroke-width="4.500"/><path d="M15 12l7 9" stroke="#fff" stroke-width="2.500"/></svg></button>
  <button class="drop" aria-label="More marking"></button><i class="cut"></i>
  <button aria-label="Color"><svg width="24" height="24"><path d="M2 6 12 1l10 4-10 5z" fill="#f0a52a" stroke="#444"/><path d="M2 6l10 4v13L2 19z" fill="#2f8ad6" stroke="#444"/><path d="M12 10l10-5v13l-10 5z" fill="#8bc34a" stroke="#444"/><use href="#arrowhead" x="13" y="10" width="9" height="13"/></svg></button>
  <button class="drop" aria-label="More colors"></button><i class="cut"></i>
  <button aria-label="Invert marking"><svg width="24" height="24"><path d="M10 1 1 23h4l7-18z" fill="#ccc" stroke="#333"/><path class="kg" d="M14 1l7 17-14 5z"/><path d="M16 12h7v5zM21 23h-8v-6z" fill="#2f8fdc"/></svg></button>
  <button aria-label="Expand marking"><svg width="24" height="24"><path d="M12 2 2 23l17-5-4-5-6 5 3-9z" fill="#ccc" stroke="#777" stroke-width="1.500"/><path d="M23 1v8l-2-2-7 7-3-3 7-7-2-2z" fill="#999"/></svg></button>
  <button class="drop" aria-label="More expansion"></button>
  <button aria-label="Delete marked"><svg width="24" height="24"><use href="#tri" fill="#bbb" stroke="#888" x="-1"/><path d="M13 13l9 9M22 13l-9 9" stroke="#888" stroke-width="2.500"/></svg></button>
  <button aria-label="Copy marked"><svg width="24" height="24"><use href="#tri" fill="#bbb" stroke="#888" x="-1"/><path d="M16 12h7v8h-7zM12 15h6v8h-6z" fill="#fff" stroke="#666"/></svg></button>
  <button aria-label="Separate marked"><svg width="24" height="24"><path d="M9 1 1 22h5" fill="none" stroke="#777" stroke-dasharray="3 2" stroke-width="1.500"/><use href="#tri" fill="#bbb" stroke="#888" x="1"/><path d="M14 16h9v4l-6 3z" fill="#aaa"/></svg></button><i class="cut"></i>
  <button aria-label="Select marked"><svg width="24" height="24"><use href="#tri" fill="#c4c4c4" stroke="#888" x="-1"/><path d="M12 11l9 9-4 1 2 3-6-1z" fill="#666"/></svg></button>
  <button aria-label="Hide marked"><svg width="24" height="24"><use href="#tri" fill="#fff" stroke="#999" x="-1"/><ellipse cx="17" cy="18" rx="6" ry="4" fill="#eee" stroke="#888" stroke-width="1.500"/><circle cx="17" cy="18" r="2" fill="#777"/></svg></button>
  <button aria-label="Show marked"><svg width="24" height="24"><use href="#tri" fill="#b5b5b5" stroke="#444" x="-1"/><ellipse cx="17" cy="18" rx="6" ry="4" fill="#fff" stroke="#2f9ad8" stroke-width="1.500"/><circle cx="17" cy="18" r="2.500" fill="#1f7fc0"/></svg></button>
  <button class="drop" aria-label="More visibility"></button><i class="cut"></i>
  <button class="on" aria-label="Triangle highlight"><svg width="24" height="24"><path d="M14 1l8 16-2 1L12 2z" fill="#c9b98a"/><path d="M11 1l9 17-18 5z" fill="#9db83a" stroke="#454520" stroke-width="1.300"/><path d="M6 22l16-4" stroke="#e09a3a"/></svg></button>
  <button class="drop onsoft" aria-label="More highlights"></button>
  <button class="on" aria-label="Back face highlight"><svg width="24" height="24"><path d="M15 1l8 15-3 3-9-17z" fill="#d8453a" stroke="#333"/><path class="kg" d="M10 2l8 16-17 5z"/></svg></button>
  <button class="drop onsoft" aria-label="More back face highlights"></button>
</nav>
<footer class="status">Ready</footer>
<div class="sliver"></div>

<section class="wizard position-absolute d-flex flex-column" role="dialog" aria-label="Fix Wizard">
  <div class="wizhead d-flex align-items-center">
    <svg width="17" height="17" viewBox="0 0 17 17"><path d="M6 1h5v5h5v5h-5v5H6v-5H1V6h5z" fill="#d81e1e" stroke="#8d1010"/></svg>
    <span class="ps-2 flex-fill">Fix Wizard (Part: Eagle Fix&nbsp; 0) &gt; Diagnostics</span>
    <div class="d-flex gap-5">
      <button aria-label="Minimize wizard"><svg width="12" height="12"><path d="M0 5.500h12" stroke="#999"/></svg></button>
      <button aria-label="Maximize wizard"><svg width="12" height="12"><path d="M.5.500h11v11H.5z" fill="none" stroke="#ddd"/></svg></button>
      <button aria-label="Close wizard"><svg width="12" height="12"><path d="M0 0l12 12M12 0 0 12" stroke="#777"/></svg></button>
    </div>
  </div>
  <div class="d-flex flex-fill">
    <nav class="wizlist d-flex flex-column" aria-label="Wizard pages">
      <a href="#" class="d-flex align-items-center picked" aria-current="page"><svg width="20" height="20"><use href="#glass"/></svg><span>Diagnostics</span></a>
      <a href="#" class="d-flex align-items-center"><svg width="20" height="20" viewBox="0 0 20 20"><g fill="#d4e2f6" stroke="#7b93bf"><path d="M8 3l8-1 2 2v10l-7 2z"/><path d="M5 5l8-1 2 2v10l-7 2z"/><path d="M3 6l8 1v11l-8-2z"/></g></svg><span>Combined Fix</span></a>
      <hr>
      <a href="#" class="d-flex align-items-center"><svg width="20" height="20"><use href="#block"/><path d="M11 9l8-4v11l-8 3z" fill="#c0272d"/></svg><span>Normals</span></a>
      <a href="#" class="d-flex align-items-center"><svg width="20" height="20"><use href="#block" x="1" y="1" width="18" height="18"/><path d="M8 5l9-3-1 4-6 3z" fill="#efe27a" stroke="#b3a43b"/></svg><span>Stitching</span></a>
      <a href="#" class="d-flex align-items-center"><svg width="20" height="20"><use href="#block"/><path d="M4 7h2v3H4zM7 12h2v3H7zM3 12h2v2H3zM13 10h2v3h-2zM16 7h2v2h-2zM15 14h2v2h-2zM9 3h3v2H9zM5 3h2v1H5zM13 4h3v1h-3z" fill="#1d2440"/></svg><span>Noise Shells</span></a>
      <a href="#" class="d-flex align-items-center"><svg width="20" height="20"><use href="#block"/><path d="M2 4l7-3 9 3-7 3z" fill="#b9283e"/></svg><span>Holes</span></a>
      <a href="#" class="d-flex align-items-center"><svg width="20" height="20"><path d="M1 5l11-4 7 3-1 11-7 4L2 15z" fill="url(#lilac)" stroke="#3d4187"/><path d="M1 5l9 1 9-2-8 15zM10 6l1 13M1 5l10 14" fill="none" stroke="#3d4187"/></svg><span>Triangles</span></a>
      <a href="#" class="d-flex align-items-center"><svg width="20" height="20"><use href="#block" width="16" height="16"/><use href="#block" x="4" y="3" width="16" height="17"/></svg><span>Overlaps</span></a>
      <a href="#" class="d-flex align-items-center"><svg width="20" height="20"><use href="#block"/><path d="M4 4l5-2 6 2-4 2z" fill="#a9b4dd"/></svg><span>Shells</span></a>
      <hr>
      <a href="#" class="d-flex align-items-center"><svg width="20" height="20"><path d="M5 2h8l4 4v12H5z" fill="#d9f0fa" stroke="#2f8fb8"/><path d="M13 2v4h4" fill="none" stroke="#2f8fb8"/><path d="M7 9h7M7 12h7M7 15h7" stroke="#1c5f80"/></svg><span>Profiles</span></a>
    </nav>
    <div class="wizmain flex-fill d-flex flex-column">
      <div class="partrow d-flex">
        <label for="part">Current Part:</label>
        <select id="part" class="form-select partselect"><option>Eagle Fix&nbsp; 0.5</option></select>
        <button class="nextbtn flex-shrink-0" disabled>Next</button>
      </div>
      <div class="sheet">
        <fieldset>
          <legend>Advice</legend>
          <div class="advice d-flex justify-content-between">
            <p>No more errors are detected. It seems that the part is ok. Note that not all parameters<br>were analysed.</p>
            <div class="scroller d-flex flex-column justify-content-between align-items-center flex-shrink-0">
              <svg width="10" height="7"><path d="M1 6l4-4 4 4" fill="none" stroke="#b5b5b5" stroke-width="2"/></svg>
              <svg width="10" height="7"><path d="M1 1l4 4 4-4" fill="none" stroke="#b5b5b5" stroke-width="2"/></svg>
            </div>
          </div>
        </fieldset>
        <fieldset>
          <legend>Diagnostics</legend>
          <div class="full d-flex align-items-center"><input class="box" type="checkbox" id="full"><label for="full">Full Analysis</label></div>
          <div class="finding d-flex align-items-center"><input class="box" type="checkbox" id="f1" checked><svg width="16" height="16"><use href="#tick"/></svg><b>0</b><label for="f1">inverted normals detected</label></div>
          <div class="finding d-flex align-items-center"><input class="box" type="checkbox" id="f2" checked><svg width="16" height="16"><use href="#tick"/></svg><b>0</b><label for="f2">bad edges detected</label></div>
          <div class="finding deep d-flex align-items-center"><i class="gapbox"></i><svg width="16" height="16"><use href="#tick"/></svg><b>0</b><span>bad contours detected</span></div>
          <div class="finding deep d-flex align-items-center"><input class="box" type="checkbox" id="f4" checked><svg width="16" height="16"><use href="#tick"/></svg><b>0</b><label for="f4">near bad edges detected</label></div>
          <div class="finding deep d-flex align-items-center"><input class="box" type="checkbox" id="f5" checked><svg width="16" height="16"><use href="#tick"/></svg><b>0</b><label for="f5">planar holes detected</label></div>
          <div class="finding d-flex align-items-center"><input class="box" type="checkbox" id="f6" checked><svg width="16" height="16"><use href="#tick"/></svg><b>1</b><label for="f6">shells detected</label></div>
          <div class="finding deep d-flex align-items-center"><i class="gapbox"></i><svg width="16" height="16"><use href="#tick"/></svg><b>0</b><span>possible noise shells detected</span></div>
          <div class="finding d-flex align-items-center"><input class="box" type="checkbox" id="f8"><svg width="16" height="16"><circle cx="8" cy="7" r="2" fill="#3a3ad0"/></svg><b></b><label for="f8">overlapping triangles detected</label></div>
          <div class="finding d-flex align-items-center"><input class="box" type="checkbox" id="f9"><svg width="16" height="16"><circle cx="8" cy="7" r="2" fill="#3a3ad0"/></svg><b></b><label for="f9">intersecting triangles detected</label></div>
          <div class="d-flex justify-content-end"><button class="plainbtn updatebtn d-flex align-items-center"><svg width="20" height="20"><path d="M2 18l6-6" stroke="#c9a35a" stroke-width="4"/><circle cx="13" cy="7" r="5.500" fill="url(#lens)" stroke="#5a6f86" stroke-width="1.200"/></svg><span class="flex-fill text-center">Update</span></button></div>
        </fieldset>
      </div>
      <div class="wizfoot d-flex justify-content-end mt-auto">
        <button class="plainbtn w-advice d-flex align-items-center"><svg width="21" height="20"><path d="M1 7h9V1h2l8 9-8 9h-2v-6H1z" fill="#58cc3c" stroke="#1f6d17" stroke-linejoin="round"/></svg><span class="flex-fill text-center">Follow Advice</span></button>
        <button class="plainbtn w-small">Close</button>
        <button class="plainbtn w-small">Help</button>
      </div>
    </div>
  </div>
  <svg class="grip position-absolute" width="14" height="14"><path d="M0 14 14 0M4 14 14 4M8 14l6-6M12 14l2-2" stroke="#888" stroke-width="1.500"/></svg>
</section>
</body>
</html>
